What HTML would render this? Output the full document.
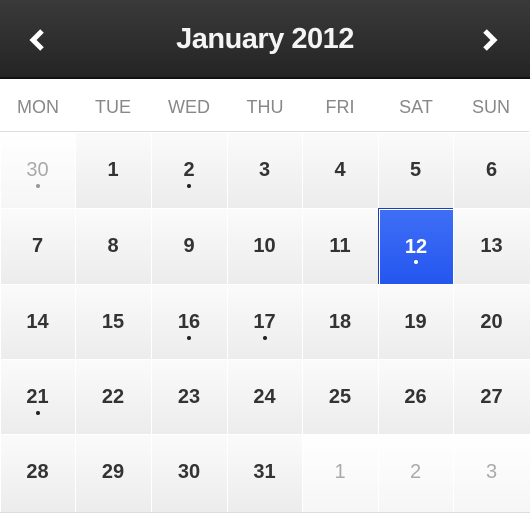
<!DOCTYPE html><html><head><style>
*{margin:0;padding:0;box-sizing:border-box}
body{width:530px;height:512px;overflow:hidden;background:#fff;font-family:"Liberation Sans",sans-serif;position:relative}
.hd{position:absolute;left:0;top:0;width:530px;height:79px;background:linear-gradient(#3a3a3a,#242424);border-bottom:2px solid #111}
.hd .t{position:absolute;left:0;right:0;top:23px;text-align:center;color:#f4f4f4;font-size:29px;font-weight:bold;letter-spacing:-0.5px}
.wk{position:absolute;top:81px;height:51px;width:76px;text-align:center;line-height:53px;font-size:18px;color:#888;border-bottom:1px solid #ddd}
.c{position:absolute;width:76px;height:76px;background:linear-gradient(#fbfbfb,#ececec);border-right:1px solid #dcdcdc;border-bottom:1px solid #dcdcdc;box-shadow:inset 1px 1px 0 #fff;text-align:center;font-size:20px;font-weight:bold;color:#333;line-height:76px}
.c.o{color:#aaa;font-weight:normal;background:linear-gradient(#fff,#f6f6f6)}
.c.s{background:linear-gradient(#3f6ff5,#2456f0);color:#fff;border:1px solid #1c3fb8}
.d{position:absolute;left:36px;top:52px;width:4px;height:4px;border-radius:2px;background:#222}
.c.o .d{background:#999}.c.s .d{background:#fff;left:35px;top:51px}
</style></head><body>
<div class="hd"><div class="t">January 2012</div>
<svg style="position:absolute;left:27px;top:28px" width="20" height="24"><path d="M15 3 L6 12 L15 21" stroke="#fff" stroke-width="5" fill="none"/></svg>
<svg style="position:absolute;left:480px;top:28px" width="20" height="24"><path d="M5 3 L14 12 L5 21" stroke="#fff" stroke-width="5" fill="none"/></svg>
</div>
<div id="g"></div>
<script>
var xs=[0,75,151,227,302,378,453],ys=[132,208,284,359,434],W=['MON','TUE','WED','THU','FRI','SAT','SUN'],h='';
for(var i=0;i<7;i++)h+='<div class="wk" style="left:'+xs[i]+'px">'+W[i]+'</div>';
var days=[30];for(var d=1;d<=31;d++)days.push(d);days.push(1,2,3);
var dots={0:1,2:1,12:1,16:1,17:1,21:1};
for(var k=0;k<35;k++){var r=Math.floor(k/7),c=k%7,cls='c';if(k==0||k>31)cls+=' o';if(k==12)cls+=' s';
h+='<div class="'+cls+'" style="left:'+xs[c]+'px;top:'+ys[r]+'px;width:'+((c<6?xs[c+1]:530)-xs[c]+1)+'px;height:'+((r<4?ys[r+1]:512)-ys[r]+1)+'px">'+days[k]+(dots[k]?'<div class="d"></div>':'')+'</div>';}
document.getElementById('g').innerHTML=h;
</script>
</body></html>
